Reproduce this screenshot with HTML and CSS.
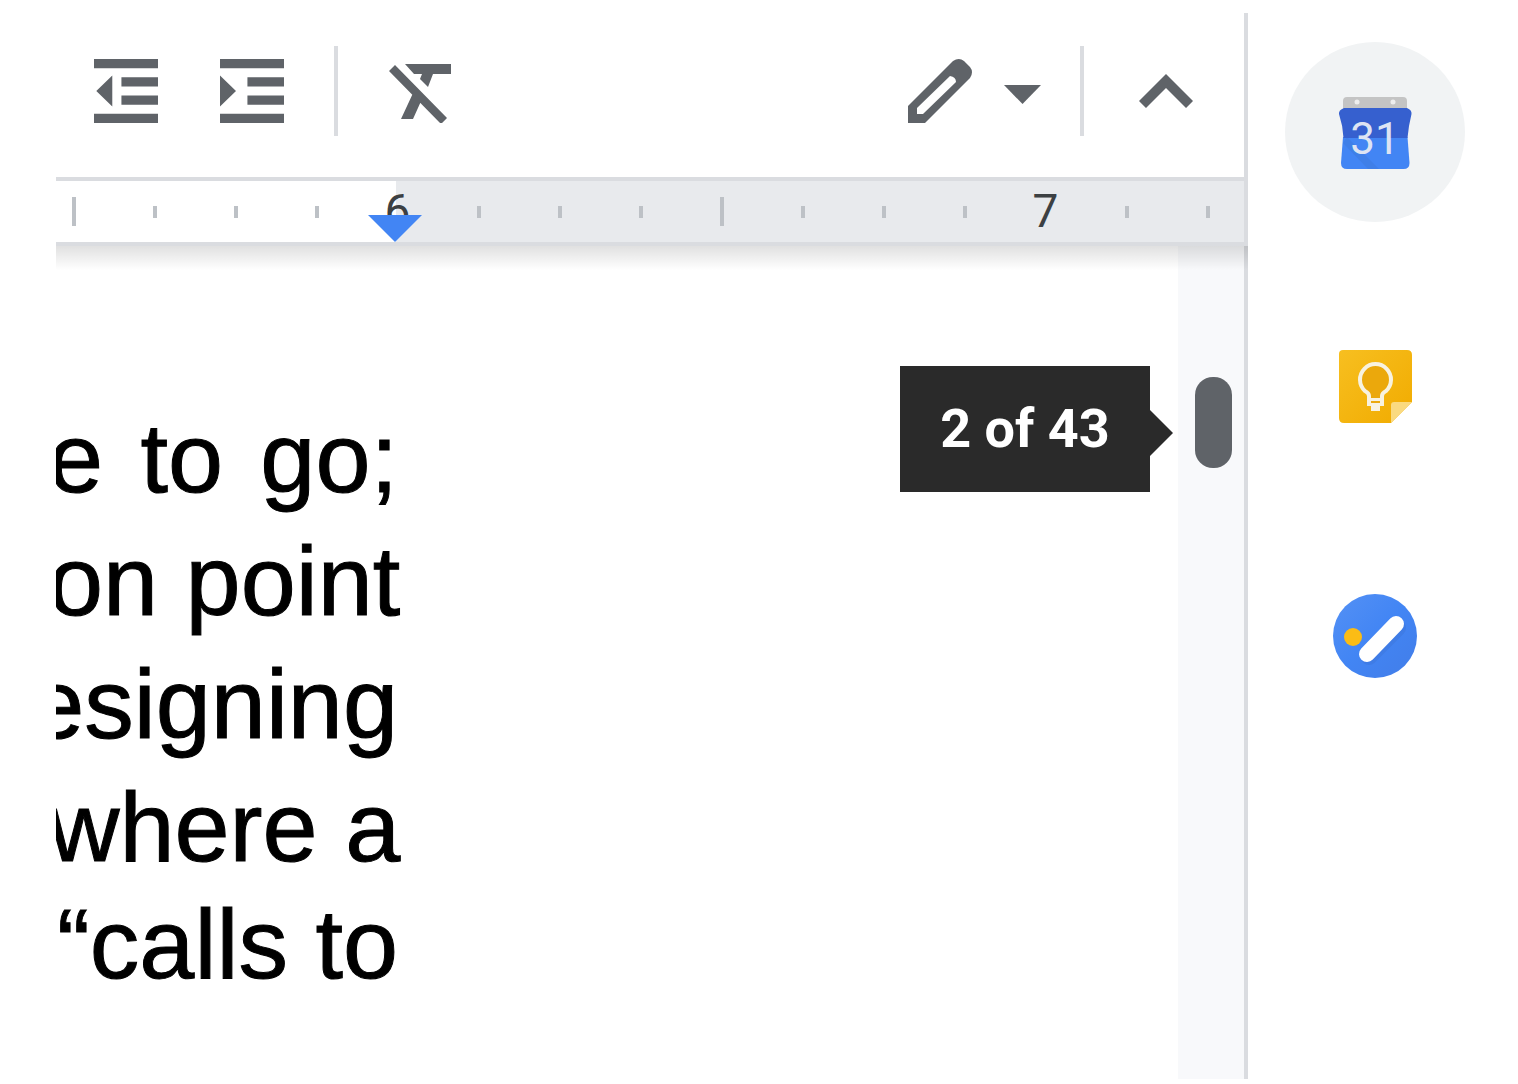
FILE: index.html
```
<!DOCTYPE html>
<html lang="en">
<head>
    <meta charset="UTF-8">
    <meta name="viewport" content="width=device-width, initial-scale=1.0">
    <title>Document</title>
    <link rel="stylesheet" href="styles.css">
</head>
<body>

<div class="app">
    <main class="editor">
        <div class="toolbar">
            <button class="btn" aria-label="Decrease indent">
                <svg width="64" height="64" viewBox="0 0 14 14"><path d="M0 0h14v2H0zM6 4h8v2H6zM6 8h8v2H6zM0 12h14v2H0zM4 3.6v6.8L.5 7z"/></svg>
            </button>
            <button class="btn indent" aria-label="Increase indent">
                <svg width="64" height="64" viewBox="0 0 14 14"><path d="M0 0h14v2H0zM6 4h8v2H6zM6 8h8v2H6zM0 12h14v2H0zM0 3.6v6.8L3.5 7z"/></svg>
            </button>
            <span class="separator"></span>
            <button class="btn clear" aria-label="Clear formatting">
                <svg width="62" height="64" viewBox="0 0 62 64"><path d="M0 12l6-6 52 53-6 6zM16 5h46v10H44l-5 13-8-8 2-5h-8zM25 32l8 8-9 20H12z"/></svg>
            </button>
            <span class="spacer"></span>
            <button class="btn mode" aria-label="Editing mode">
                <svg width="64" height="64" viewBox="0 0 64 64"><path fill-rule="evenodd" d="M0 47L45 2q6-4 11 0l6 6q4 5 0 11L17 64H0zM9 49v6h6l33-32q0-5-6-6z"/></svg>
                <svg width="37" height="19" viewBox="0 0 37 19"><path d="M0 0h37L18.5 19z"/></svg>
            </button>
            <span class="separator"></span>
            <button class="btn collapse" aria-label="Hide the menus">
                <svg width="54" height="34" viewBox="0 0 54 34"><path d="M0 27L27 0l27 27-7 7-20-20L7 34z"/></svg>
            </button>
        </div>

        <div class="ruler">
            <div class="marks">
                <span class="mark long"></span>
                <span class="mark"></span>
                <span class="mark"></span>
                <span class="mark"></span>
                <span class="number">6</span>
                <span class="mark"></span>
                <span class="mark"></span>
                <span class="mark"></span>
                <span class="mark long"></span>
                <span class="mark"></span>
                <span class="mark"></span>
                <span class="mark"></span>
                <span class="number">7</span>
                <span class="mark"></span>
                <span class="mark"></span>
            </div>
            <span class="margin-handle"></span>
        </div>

        <div class="document">
            <div class="page">
                <div class="text">
                    <div>e to go;</div>
                    <div>on point</div>
                    <div class="word">esigning</div>
                    <div>where a</div>
                    <div class="single">“calls to</div>
                </div>
                <div class="tooltip">2 of 43</div>
            </div>
            <div class="scrollbar">
                <div class="thumb"></div>
            </div>
        </div>
    </main>

    <aside class="sidebar">
        <button class="addon active" aria-label="Calendar">
            <svg width="74" height="74" viewBox="0 0 74 74">
                <path fill="#c4c4c4" d="M5 14V6q0-4 4-4h56q4 0 4 4v8z"/>
                <circle cx="19" cy="7" r="2.5" fill="#eee"/>
                <circle cx="55" cy="7" r="2.5" fill="#eee"/>
                <path fill="#4285f4" d="M5 42h64.500l2 26q0 6-6 6H9q-6 0-6-6z"/>
                <path fill="#3f7fe8" d="M9 42L41 74H30L5 48z"/>
                <path fill="#3660cf" d="M6 13h63q5 2 4.500 6-3 12-4 24H5.500Q5 31 1 19q-.5-4 5-6z"/>
                <text class="date" x="37" y="59" text-anchor="middle">31</text>
            </svg>
        </button>
        <button class="addon" aria-label="Keep">
            <svg width="84" height="84" viewBox="0 0 84 84">
                <defs>
                    <linearGradient id="keep" x1="0" y1="0" x2="1" y2="1">
                        <stop offset="0" stop-color="#f7bf20"/>
                        <stop offset="1" stop-color="#f1ab00"/>
                    </linearGradient>
                </defs>
                <path fill="url(#keep)" d="M10 8h64q5 0 5 5v47L58 81H11q-5 0-5-5V12q0-4 4-4z"/>
                <path fill="#fada80" d="M58 81V63q0-3 3-3h18z"/>
                <path fill="#eba80c" stroke="#f8f2e0" stroke-width="4" d="M36 62v-8q0-3-4-5a15.500 15.500 0 1 1 21 0q-4 2-4 5v8z"/>
                <path fill="#f8f2e0" d="M34 56h17v8h-4v5h-9v-5h-4z"/>
                <path fill="#eba80c" d="M38 59h9v2h-9z"/>
            </svg>
        </button>
        <button class="addon" aria-label="Tasks">
            <svg width="84" height="84" viewBox="0 0 84 84">
                <defs>
                    <linearGradient id="tasks" x1="0" y1="0" x2="1" y2="1">
                        <stop offset="0" stop-color="#5491f5"/>
                        <stop offset=".5" stop-color="#4285f4"/>
                        <stop offset="1" stop-color="#427de8"/>
                    </linearGradient>
                </defs>
                <circle cx="42" cy="42" r="42" fill="url(#tasks)"/>
                <path stroke="#3f7ce6" stroke-width="16" stroke-linecap="round" d="M36 63l29-29"/>
                <circle cx="20" cy="43" r="9" fill="#fbbc15"/>
                <path stroke="#fff" stroke-width="16" stroke-linecap="round" d="M34 60l29-30"/>
            </svg>
        </button>
    </aside>
</div>

</body>
</html>
```
FILE: styles.css
```
* {
    box-sizing: border-box;
}
body {
    margin: 0;
    background-color: #fff;
    font-family: Roboto, sans-serif;
}
button {
    padding: 0;
    border: none;
    background: none;
    font-family: inherit;
    cursor: pointer;
}
svg {
    display: block;
    fill: #5f6368;
}
.app {
    display: flex;
    height: 100vh;
    padding: 13px 0 5px 56px;
}
.editor {
    flex: 1;
    display: flex;
    flex-direction: column;
    min-width: 0;
    border-right: 4px solid #dadce0;
}

/* Toolbar */
.toolbar {
    display: flex;
    align-items: center;
    height: 164px;
    padding: 0 51px 9px 38px;
}
.btn {
    display: flex;
    align-items: center;
}
.indent {
    margin: 0 50px 0 62px;
}
.clear {
    margin-left: 51px;
}
.mode {
    gap: 32px;
    margin-right: 39px;
}
.mode svg:last-child {
    margin-top: 8px;
}
.collapse {
    margin-left: 55px;
}
.separator {
    width: 4px;
    height: 90px;
    background-color: #dadce0;
}
.spacer {
    flex: 1;
}

/* Ruler */
.ruler {
    position: relative;
    z-index: 1;
    height: 69px;
    border-top: 4px solid #dadce0;
    border-bottom: 4px solid #dadce0;
    background: linear-gradient(to right, #fff 340px, #e8eaed 340px);
}
.ruler::after {
    content: "";
    position: absolute;
    top: 65px;
    left: 0;
    right: -4px;
    height: 24px;
    background: linear-gradient(rgba(0, 0, 0, 0.12), rgba(0, 0, 0, 0));
}
.marks {
    display: flex;
    align-items: center;
    height: 61px;
    overflow: hidden;
}
.mark,
.number {
    flex: 0 0 81px;
    display: flex;
    justify-content: center;
}
.mark:first-child {
    margin-left: -23px;
}
.mark::before {
    content: "";
    width: 4px;
    height: 12px;
    background-color: #bdc1c6;
}
.long::before {
    height: 29px;
}
.number {
    font-size: 46px;
    line-height: 61px;
    color: #3c4043;
}
.margin-handle {
    position: absolute;
    left: 312px;
    bottom: 0;
    border: 27px solid transparent;
    border-top-color: #4285f4;
    border-bottom: none;
}

/* Document */
.document {
    flex: 1;
    display: flex;
    min-height: 0;
}
.page {
    position: relative;
    flex: 1;
    overflow: hidden;
}
.text {
    width: 350px;
    margin-left: -8px;
    padding-top: 150px;
    font-family: "Liberation Sans", Arial, sans-serif;
    font-size: 99px;
    line-height: 123px;
    text-align: justify;
    text-align-last: justify;
    white-space: nowrap;
    color: #000;
    -webkit-text-stroke: 1px #000;
}
.word {
    display: flex;
    justify-content: flex-end;
}
.single {
    line-height: 112px;
    text-align-last: right;
}
.tooltip {
    position: absolute;
    top: 120px;
    right: 28px;
    width: 250px;
    background-color: #2a2a2a;
    color: #fff;
    font-size: 54px;
    font-weight: bold;
    line-height: 126px;
    text-align: center;
}
.tooltip::after {
    content: "";
    position: absolute;
    top: 44px;
    left: 100%;
    border: 23px solid transparent;
    border-left-color: #2a2a2a;
    border-right: none;
}
.scrollbar {
    width: 66px;
    padding: 131px 12px 0 17px;
    background-color: #f8f9fb;
}
.thumb {
    height: 91px;
    border-radius: 18px;
    background-color: #5f6368;
}

/* Side panel */
.sidebar {
    display: flex;
    flex-direction: column;
    gap: 72px;
    width: 270px;
    padding: 29px 53px 0 37px;
}
.addon {
    display: flex;
    justify-content: center;
    align-items: center;
    width: 180px;
    height: 180px;
    border-radius: 50%;
}
.active {
    background-color: #f1f3f4;
}
.date {
    font-size: 44px;
    fill: #dde4f3;
}
```
